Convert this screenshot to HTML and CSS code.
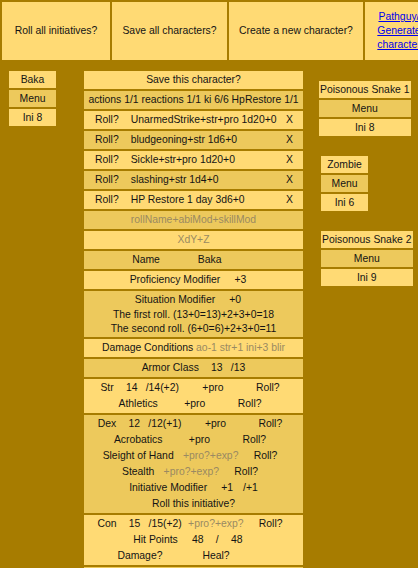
FILE: index.html
```html
<!DOCTYPE html>
<html lang="en">
<head>
    <meta charset="UTF-8">
    <meta name="viewport" content="width=device-width, initial-scale=1.0">
    <title>Initiative Tracker</title>
    <link rel="stylesheet" href="styles.css">
</head>
<body>
    <!-- Top buttons -->
    <div class="topbar">
        <div class="topcell roll-all">Roll all initiatives?</div>
        <div class="topcell save-all">Save all characters?</div>
        <div class="topcell create">Create a new character?</div>
        <div class="topcell link-cell"><a href="#">Pathguy/ Generate character</a></div>
    </div>

    <div class="main">
        <!-- Selected character -->
        <div class="card">
            <div class="box">Baka</div>
            <div class="box dark">Menu</div>
            <div class="box">Ini 8</div>
        </div>

        <!-- Character sheet -->
        <div class="sheet">
            <div class="row">Save this character?</div>
            <div class="row dark">actions 1/1 reactions 1/1 ki 6/6 HpRestore 1/1</div>

            <div class="row attack"><span class="atk-roll">Roll?</span><span class="atk-name">UnarmedStrike+str+pro 1d20+0</span><span>X</span></div>
            <div class="row attack dark"><span class="atk-roll">Roll?</span><span class="atk-name">bludgeoning+str 1d6+0</span><span>X</span></div>
            <div class="row attack"><span class="atk-roll">Roll?</span><span class="atk-name">Sickle+str+pro 1d20+0</span><span>X</span></div>
            <div class="row attack dark"><span class="atk-roll">Roll?</span><span class="atk-name">slashing+str 1d4+0</span><span>X</span></div>
            <div class="row attack"><span class="atk-roll">Roll?</span><span class="atk-name">HP Restore 1 day 3d6+0</span><span>X</span></div>

            <div class="row dark hint">rollName+abiMod+skillMod</div>
            <div class="row hint">XdY+Z</div>

            <div class="row dark">
                <div class="line">
                    <span>Name</span><span class="name-val">Baka</span>
                </div>
            </div>
            <div class="row">
                <div class="line pad">
                    <span>Proficiency Modifier</span><span class="num wide">+3</span>
                </div>
            </div>
            <div class="row dark">
                <div class="line pad">
                    <span>Situation Modifier</span><span class="num wide">+0</span>
                </div>
                <div class="text">The first roll. (13+0=13)+2+3+0=18</div>
                <div class="text">The second roll. (6+0=6)+2+3+0=11</div>
            </div>
            <div class="row">Damage Conditions <span class="hint">ao-1 str+1 ini+3 blir</span></div>
            <div class="row dark">
                <div class="line">
                    <span>Armor Class</span><span class="num">13</span><span class="slash">/13</span>
                </div>
            </div>

            <!-- Strength -->
            <div class="row">
                <div class="line pad">
                    <span>Str</span><span class="num">14</span><span class="slash">/14(+2)</span><span class="prof">+pro</span><span class="roll">Roll?</span>
                </div>
                <div class="line pad">
                    <span>Athletics</span><span class="prof skill">+pro</span><span class="roll">Roll?</span>
                </div>
            </div>

            <!-- Dexterity -->
            <div class="row dark">
                <div class="line pad">
                    <span>Dex</span><span class="num">12</span><span class="slash">/12(+1)</span><span class="prof">+pro</span><span class="roll">Roll?</span>
                </div>
                <div class="line pad">
                    <span>Acrobatics</span><span class="prof skill">+pro</span><span class="roll">Roll?</span>
                </div>
                <div class="line pad">
                    <span>Sleight of Hand</span><span class="prof skill hint">+pro?+exp?</span><span class="roll">Roll?</span>
                </div>
                <div class="line pad">
                    <span>Stealth</span><span class="prof skill hint">+pro?+exp?</span><span class="roll">Roll?</span>
                </div>
                <div class="line">
                    <span>Initiative Modifier</span><span class="num wide">+1</span><span class="slash gap">/+1</span>
                </div>
                <div>Roll this initiative?</div>
            </div>

            <!-- Constitution -->
            <div class="row">
                <div class="line pad">
                    <span>Con</span><span class="num">15</span><span class="slash">/15(+2)</span><span class="prof hint">+pro?+exp?</span><span class="roll">Roll?</span>
                </div>
                <div class="line pad">
                    <span>Hit Points</span><span class="num wide">48</span><span class="slash hp">/</span><span class="num wide">48</span>
                </div>
                <div class="line">
                    <span class="hp-btn">Damage?</span><span class="hp-btn">Heal?</span>
                </div>
            </div>

            <!-- Intelligence -->
            <div class="row dark">
                <div class="line pad">
                    <span>Int</span><span class="num">10</span><span class="slash">/10(+0)</span><span class="prof hint">+pro?+exp?</span><span class="roll">Roll?</span>
                </div>
            </div>
        </div>

        <!-- Other characters -->
        <div class="side">
            <div class="card">
                <div class="box">Poisonous Snake 1</div>
                <div class="box dark">Menu</div>
                <div class="box">Ini 8</div>
            </div>
            <div class="card">
                <div class="box">Zombie</div>
                <div class="box dark">Menu</div>
                <div class="box">Ini 6</div>
            </div>
            <div class="card">
                <div class="box">Poisonous Snake 2</div>
                <div class="box dark">Menu</div>
                <div class="box">Ini 9</div>
            </div>
        </div>
    </div>
</body>
</html>
```

FILE: styles.css
```css
body {
    margin: 0;
    background-color: #a77c00;
    font-family: "Liberation Sans", Arial, sans-serif;
    font-size: 10.4px;
    color: #141414;
}

/* Top buttons */
.topbar {
    display: flex;
    gap: 2px;
    padding: 2px;
    overflow: hidden;
}

.topcell {
    flex: none;
    display: flex;
    align-items: center;
    justify-content: center;
    padding: 8px 10px;
    line-height: 14px;
    text-align: center;
    background-color: #ffda74;
}

.roll-all {
    width: 88px;
}

.save-all {
    width: 95px;
}

.create {
    width: 114px;
}

.link-cell {
    width: 48px;
}

.link-cell a {
    color: #0000ee;
}

/* Layout */
.main {
    display: flex;
    align-items: flex-start;
    padding: 9px 0 0 9px;
}

.card {
    display: flex;
    flex-direction: column;
    gap: 2px;
}

.box {
    box-sizing: border-box;
    min-width: 47px;
    height: 17px;
    padding: 0 1px;
    line-height: 17px;
    text-align: center;
    white-space: nowrap;
    background-color: #ffda74;
}

.side {
    display: flex;
    flex-direction: column;
    align-items: flex-start;
    gap: 20px;
    margin-left: 16px;
    padding-top: 10px;
}

.side .card + .card {
    margin-left: 2px;
}

/* Character sheet */
.sheet {
    flex: none;
    width: 219px;
    margin-left: 28px;
    display: flex;
    flex-direction: column;
    gap: 2px;
}

.row {
    padding: 1px 0;
    line-height: 16px;
    text-align: center;
    white-space: nowrap;
    background-color: #ffda74;
}

.row .text {
    line-height: 14px;
}

.dark,
.box.dark {
    background-color: #edc95c;
}

.hint {
    color: #9a8a62;
}

.attack {
    display: flex;
    padding: 1px 10px 1px 11px;
    text-align: left;
}

.atk-roll {
    margin-right: 12px;
}

.atk-name {
    flex: 1;
}

.line {
    display: flex;
    justify-content: center;
}

.line.pad {
    padding-right: 7px;
}

.num {
    width: 20px;
    margin-left: 8px;
    text-align: center;
}

.num.wide {
    margin-left: 10px;
}

.slash {
    margin-left: 4px;
}

.slash.gap {
    margin-left: 6px;
}

.slash.hp {
    margin-left: 8px;
    margin-right: -1px;
}

.slash.hp + .num {
    margin-left: 9px;
}

.prof {
    width: 56px;
    margin-left: 6px;
    text-align: center;
}

.prof.skill {
    margin-left: 9px;
}

.roll {
    margin-left: 15px;
}

.name-val {
    width: 57px;
    margin-left: 35px;
    padding-left: 3px;
    text-align: left;
}

.hp-btn {
    margin-left: 40px;
}

.hp-btn:first-child {
    margin-left: 0;
    margin-right: 0;
}

.hp-btn:last-child {
    margin-right: 40px;
}
```
